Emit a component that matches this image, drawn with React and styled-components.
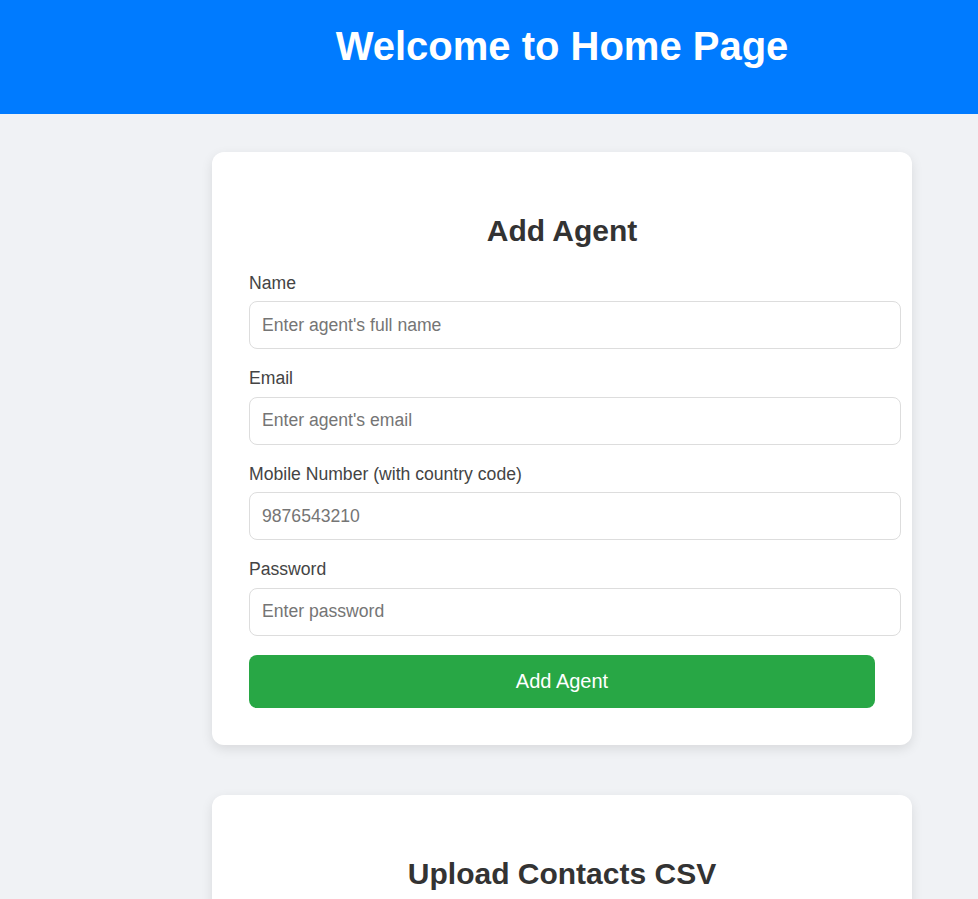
import React, { useState } from "react";
import styled, { createGlobalStyle } from "styled-components";

const GlobalStyle = createGlobalStyle`
  body {
    margin: 0;
    background: #f0f2f5;
    font-family: "Liberation Sans", Arial, sans-serif;
    color: #333;
  }
`;

const Header = styled.header`
  background: #007bff;
  padding: 23px 0 45px 146px;
  text-align: center;
`;

const Title = styled.h1`
  margin: 0;
  color: #fff;
  font-size: 40px;
  line-height: 46px;
  font-weight: bold;
`;

const Main = styled.main`
  padding: 38px 0 40px 146px;
  display: flex;
  flex-direction: column;
  align-items: center;
  gap: 50px;
`;

const Card = styled.section`
  width: 700px;
  box-sizing: border-box;
  background: #fff;
  border-radius: 12px;
  padding: 37px;
  box-shadow: 0 4px 12px rgba(0, 0, 0, 0.1);
`;

const CardTitle = styled.h2`
  margin: 25px 0 24.5px;
  text-align: center;
  font-size: 30px;
  line-height: 34px;
  color: #333;
`;

const Label = styled.label`
  display: block;
  margin-bottom: 8px;
  font-size: 17.6px;
  line-height: 20.5px;
  color: #444;
`;

const Input = styled.input`
  display: block;
  width: 100%;
  height: 22px;
  padding: 12px;
  margin-bottom: 19px;
  border: 1px solid #ddd;
  border-radius: 8px;
  font-family: inherit;
  font-size: 17.6px;
  color: #333;
  outline: none;

  &::placeholder {
    color: #757575;
  }
`;

const Button = styled.button`
  display: block;
  width: 100%;
  padding: 15px;
  border: none;
  border-radius: 8px;
  background: ${(p) => (p.$variant === "blue" ? "#007bff" : "#28a745")};
  color: #fff;
  font-family: inherit;
  font-size: 20px;
  line-height: 23px;
  cursor: pointer;
`;

const fields = [
  { id: "name", label: "Name", type: "text", placeholder: "Enter agent's full name" },
  { id: "email", label: "Email", type: "email", placeholder: "Enter agent's email" },
  { id: "mobile", label: "Mobile Number (with country code)", type: "text", placeholder: "9876543210" },
  { id: "password", label: "Password", type: "password", placeholder: "Enter password" },
];

export default function App() {
  const [form, setForm] = useState({ name: "", email: "", mobile: "", password: "" });

  const handleChange = (e) => setForm({ ...form, [e.target.id]: e.target.value });

  return (
    <>
      <GlobalStyle />
      <Header>
        <Title>Welcome to Home Page</Title>
      </Header>
      <Main>
        <Card>
          <CardTitle>Add Agent</CardTitle>
          <form onSubmit={(e) => e.preventDefault()}>
            {fields.map((f) => (
              <div key={f.id}>
                <Label htmlFor={f.id}>{f.label}</Label>
                <Input
                  id={f.id}
                  type={f.type}
                  placeholder={f.placeholder}
                  value={form[f.id]}
                  onChange={handleChange}
                />
              </div>
            ))}
            <Button type="submit">Add Agent</Button>
          </form>
        </Card>

        <Card>
          <CardTitle>Upload Contacts CSV</CardTitle>
          <form onSubmit={(e) => e.preventDefault()}>
            <Label htmlFor="csv">Select file</Label>
            <Input id="csv" type="file" accept=".csv" />
            <Button type="submit" $variant="blue">Upload</Button>
          </form>
        </Card>
      </Main>
    </>
  );
}
